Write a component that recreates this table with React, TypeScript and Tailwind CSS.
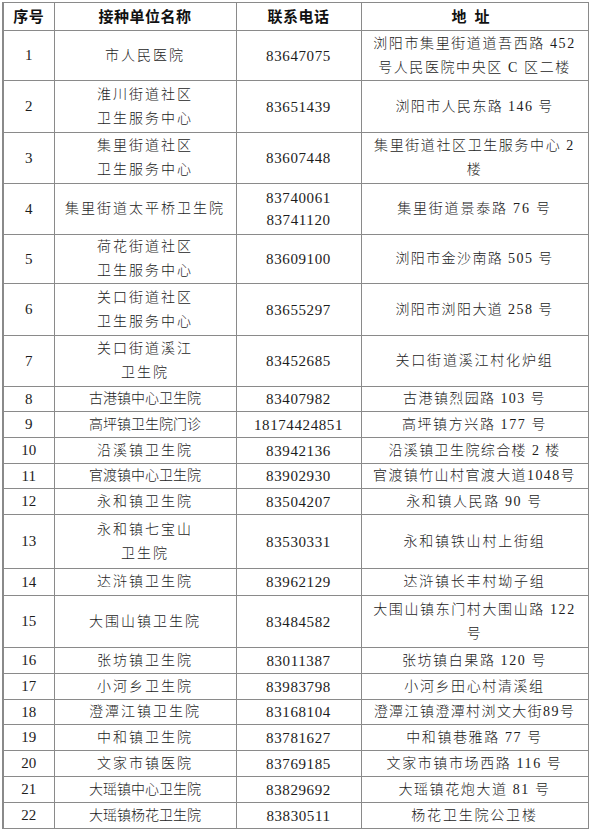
import React from "react"

type Row = {
  no: string
  name: string[]
  nameTrack: string
  phone: string[]
  addr: string[]
  addrTrack: string
  h: string
}

const rows: Row[] = [
  { no: "1", name: ["市人民医院"], nameTrack: "tracking-[2px]", phone: ["83647075"], addr: ["浏阳市集里街道道吾西路 452", "号人民医院中央区 C 区二楼"], addrTrack: "tracking-[1.6px]", h: "h-[50px]" },
  { no: "2", name: ["淮川街道社区", "卫生服务中心"], nameTrack: "tracking-[2px]", phone: ["83651439"], addr: ["浏阳市人民东路 146 号"], addrTrack: "tracking-[1.4px]", h: "h-[52px]" },
  { no: "3", name: ["集里街道社区", "卫生服务中心"], nameTrack: "tracking-[2px]", phone: ["83607448"], addr: ["集里街道社区卫生服务中心 2", "楼"], addrTrack: "tracking-[1.6px]", h: "h-[51px]" },
  { no: "4", name: ["集里街道太平桥卫生院"], nameTrack: "tracking-[2px]", phone: ["83740061", "83741120"], addr: ["集里街道景泰路 76 号"], addrTrack: "tracking-[1.8px]", h: "h-[51px]" },
  { no: "5", name: ["荷花街道社区", "卫生服务中心"], nameTrack: "tracking-[2px]", phone: ["83609100"], addr: ["浏阳市金沙南路 505 号"], addrTrack: "tracking-[1.4px]", h: "h-[49px]" },
  { no: "6", name: ["关口街道社区", "卫生服务中心"], nameTrack: "tracking-[2px]", phone: ["83655297"], addr: ["浏阳市浏阳大道 258 号"], addrTrack: "tracking-[1.4px]", h: "h-[52px]" },
  { no: "7", name: ["关口街道溪江", "卫生院"], nameTrack: "tracking-[2px]", phone: ["83452685"], addr: ["关口街道溪江村化炉组"], addrTrack: "tracking-[1.8px]", h: "h-[51px]" },
  { no: "8", name: ["古港镇中心卫生院"], nameTrack: "tracking-[0px]", phone: ["83407982"], addr: ["古港镇烈园路 103 号"], addrTrack: "tracking-[1.4px]", h: "h-[25px]" },
  { no: "9", name: ["高坪镇卫生院门诊"], nameTrack: "tracking-[0px]", phone: ["18174424851"], addr: ["高坪镇方兴路 177 号"], addrTrack: "tracking-[1.6px]", h: "h-[26px]" },
  { no: "10", name: ["沿溪镇卫生院"], nameTrack: "tracking-[2px]", phone: ["83942136"], addr: ["沿溪镇卫生院综合楼 2 楼"], addrTrack: "tracking-[1.4px]", h: "h-[26px]" },
  { no: "11", name: ["官渡镇中心卫生院"], nameTrack: "tracking-[0px]", phone: ["83902930"], addr: ["官渡镇竹山村官渡大道1048号"], addrTrack: "tracking-[1.4px]", h: "h-[25px]" },
  { no: "12", name: ["永和镇卫生院"], nameTrack: "tracking-[2px]", phone: ["83504207"], addr: ["永和镇人民路 90 号"], addrTrack: "tracking-[1.6px]", h: "h-[26px]" },
  { no: "13", name: ["永和镇七宝山", "卫生院"], nameTrack: "tracking-[2px]", phone: ["83530331"], addr: ["永和镇铁山村上街组"], addrTrack: "tracking-[1.8px]", h: "h-[54px]" },
  { no: "14", name: ["达浒镇卫生院"], nameTrack: "tracking-[2px]", phone: ["83962129"], addr: ["达浒镇长丰村坳子组"], addrTrack: "tracking-[1.8px]", h: "h-[27px]" },
  { no: "15", name: ["大围山镇卫生院"], nameTrack: "tracking-[2px]", phone: ["83484582"], addr: ["大围山镇东门村大围山路 122", "号"], addrTrack: "tracking-[1.6px]", h: "h-[52px]" },
  { no: "16", name: ["张坊镇卫生院"], nameTrack: "tracking-[2px]", phone: ["83011387"], addr: ["张坊镇白果路 120 号"], addrTrack: "tracking-[1.6px]", h: "h-[26px]" },
  { no: "17", name: ["小河乡卫生院"], nameTrack: "tracking-[2px]", phone: ["83983798"], addr: ["小河乡田心村清溪组"], addrTrack: "tracking-[1.6px]", h: "h-[26px]" },
  { no: "18", name: ["澄潭江镇卫生院"], nameTrack: "tracking-[2px]", phone: ["83168104"], addr: ["澄潭江镇澄潭村浏文大街89号"], addrTrack: "tracking-[1.4px]", h: "h-[25px]" },
  { no: "19", name: ["中和镇卫生院"], nameTrack: "tracking-[2px]", phone: ["83781627"], addr: ["中和镇巷雅路 77 号"], addrTrack: "tracking-[1.6px]", h: "h-[26px]" },
  { no: "20", name: ["文家市镇医院"], nameTrack: "tracking-[2px]", phone: ["83769185"], addr: ["文家市镇市场西路 116 号"], addrTrack: "tracking-[1.6px]", h: "h-[26px]" },
  { no: "21", name: ["大瑶镇中心卫生院"], nameTrack: "tracking-[0px]", phone: ["83829692"], addr: ["大瑶镇花炮大道 81 号"], addrTrack: "tracking-[1.6px]", h: "h-[26px]" },
  { no: "22", name: ["大瑶镇杨花卫生院"], nameTrack: "tracking-[0px]", phone: ["83830511"], addr: ["杨花卫生院公卫楼"], addrTrack: "tracking-[1.8px]", h: "h-[26px]" },
]

const cell = "border border-[#8a8a8a] p-0 text-center align-middle"

function Lines({ lines, lh = "leading-[24px]" }: { lines: string[]; lh?: string }) {
  return (
    <>
      {lines.map((l, i) => (
        <div key={i} className={lh}>
          {l}
        </div>
      ))}
    </>
  )
}

export default function App() {
  return (
    <div className="min-h-[837px] bg-white pl-[2px] pt-[2px]">
      <table
        className="w-[585px] table-fixed border-collapse border-l-2 border-l-[#8a8a8a] text-[14px] text-[#1c1c1c]"
        style={{ fontFamily: '"Liberation Serif", "Noto Sans CJK SC", serif' }}
      >
        <colgroup>
          <col className="w-[51px]" />
          <col className="w-[182px]" />
          <col className="w-[125px]" />
          <col className="w-[227px]" />
        </colgroup>
        <thead>
          <tr className="h-[28px]">
            {["序号", "接种单位名称", "联系电话", "地　址"].map((t) => (
              <th
                key={t}
                className={`${cell} text-[15px] font-bold tracking-[0.5px] text-[#111]`}
                style={{ fontFamily: '"Noto Sans CJK SC", sans-serif' }}
              >
                {t === "地　址" ? <span className="tracking-[8px]">地址</span> : t}
              </th>
            ))}
          </tr>
        </thead>
        <tbody>
          {rows.map((r) => (
            <tr key={r.no} className={r.h}>
              <td className={`${cell} text-[15px]`}>{r.no}</td>
              <td className={`${cell} ${r.nameTrack} font-light`}>
                <Lines lines={r.name} />
              </td>
              <td className={`${cell} text-[15px] tracking-[0.6px]`}>
                <Lines lines={r.phone} lh="leading-[22px]" />
              </td>
              <td className={`${cell} ${r.addrTrack} font-light`}>
                <Lines lines={r.addr} />
              </td>
            </tr>
          ))}
        </tbody>
      </table>
    </div>
  )
}
